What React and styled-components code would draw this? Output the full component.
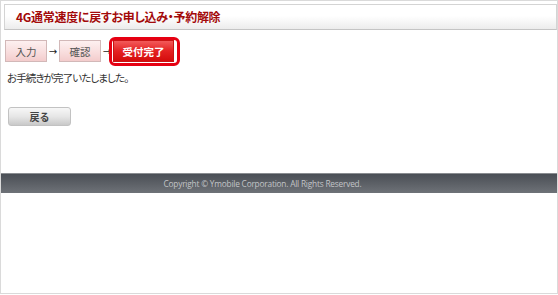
import React from "react";
import styled, { createGlobalStyle } from "styled-components";

const Global = createGlobalStyle`
  html, body { margin: 0; padding: 0; background: #fff; }
  body { font-family: "Noto Sans CJK JP", "Noto Sans", sans-serif; }
`;

const Frame = styled.div`
  box-sizing: border-box;
  width: 558px;
  height: 294px;
  border: 1px solid #dadada;
  display: flex;
  flex-direction: column;
`;

const Content = styled.div`
  padding: 3px 0 0 3px;
  display: flex;
  flex-direction: column;
`;

const TitleBar = styled.div`
  box-sizing: border-box;
  height: 26px;
  border: 1px solid #d4d4d4;
  border-bottom-color: #c4c4c4;
  background: linear-gradient(#ffffff 0%, #ffffff 45%, #ececec 100%);
  display: flex;
  align-items: center;
  padding-left: 11px;
`;

const Title = styled.h1`
  margin: 0;
  font-size: 12px;
  font-weight: bold;
  color: #a30a0a;
  line-height: 1;
  letter-spacing: -0.3px;
  font-feature-settings: "palt";
`;

const Steps = styled.div`
  display: flex;
  align-items: center;
  margin-top: 10px;
  margin-left: 1px;
  height: 22px;
`;

const Step = styled.div`
  position: relative;
  box-sizing: border-box;
  height: 22px;
  width: ${(p) => p.$w}px;
  display: flex;
  align-items: center;
  justify-content: center;
  font-size: 10.5px;
  border: 1px solid ${(p) => (p.$active ? "#c81414" : "#d2b8b8")};
  background: ${(p) =>
    p.$active
      ? "linear-gradient(#f35a5a 0%, #e42222 50%, #d40c0c 100%)"
      : "linear-gradient(#fdf0f0 0%, #f8dcdc 60%, #f3cccc 100%)"};
  color: ${(p) => (p.$active ? "#fff" : "#555")};
  font-weight: ${(p) => (p.$active ? "bold" : "normal")};
`;

const Highlight = styled.span`
  position: absolute;
  left: -5px;
  top: -4px;
  right: -7px;
  bottom: -5px;
  border: 3px solid #e60012;
  border-radius: 6px;
  pointer-events: none;
`;

const Arrow = styled.span`
  font-size: 10px;
  color: #222;
  width: ${(p) => p.$w}px;
  text-align: center;
  font-family: "DejaVu Sans", sans-serif;
`;

const Message = styled.p`
  margin: 9px 0 0 3px;
  font-size: 10.5px;
  line-height: 14px;
  color: #333;
  font-feature-settings: "palt";
  letter-spacing: -0.9px;
`;

const BackButton = styled.button`
  box-sizing: border-box;
  margin: 22px 0 0 4px;
  width: 63px;
  height: 19px;
  border: 1px solid #c2c2c2;
  border-radius: 3px;
  background: linear-gradient(#f7f7f7 0%, #e6e6e6 50%, #c9c9c9 100%);
  font-family: "Noto Sans CJK JP", sans-serif;
  font-size: 10px;
  font-weight: bold;
  color: #444;
  padding: 0;
  display: flex;
  align-items: center;
  justify-content: center;
`;

const Footer = styled.footer`
  margin-top: 47px;
  height: 20px;
  background: linear-gradient(#4a4f56 0%, #5c6066 50%, #6e7278 100%);
  border-top: 1px solid #8a8d91;
  box-sizing: border-box;
  display: flex;
  align-items: center;
  justify-content: center;
  padding-right: 33px;
`;

const Copy = styled.span`
  font-family: "Open Sans", sans-serif;
  font-size: 8.3px;
  color: #c2c4c7;
  letter-spacing: -0.2px;
`;

export default function App() {
  return (
    <>
      <Global />
      <Frame>
        <Content>
          <TitleBar>
            <Title>4G通常速度に戻すお申し込み・予約解除</Title>
          </TitleBar>
          <Steps>
            <Step $w={42}>入力</Step>
            <Arrow $w={12}>→</Arrow>
            <Step $w={42}>確認</Step>
            <Arrow $w={12}>→</Arrow>
            <Step $w={61} $active>
              受付完了
              <Highlight />
            </Step>
          </Steps>
          <Message>お手続きが完了いたしました。</Message>
          <BackButton>戻る</BackButton>
        </Content>
        <Footer>
          <Copy>Copyright © Ymobile Corporation. All Rights Reserved.</Copy>
        </Footer>
      </Frame>
    </>
  );
}
